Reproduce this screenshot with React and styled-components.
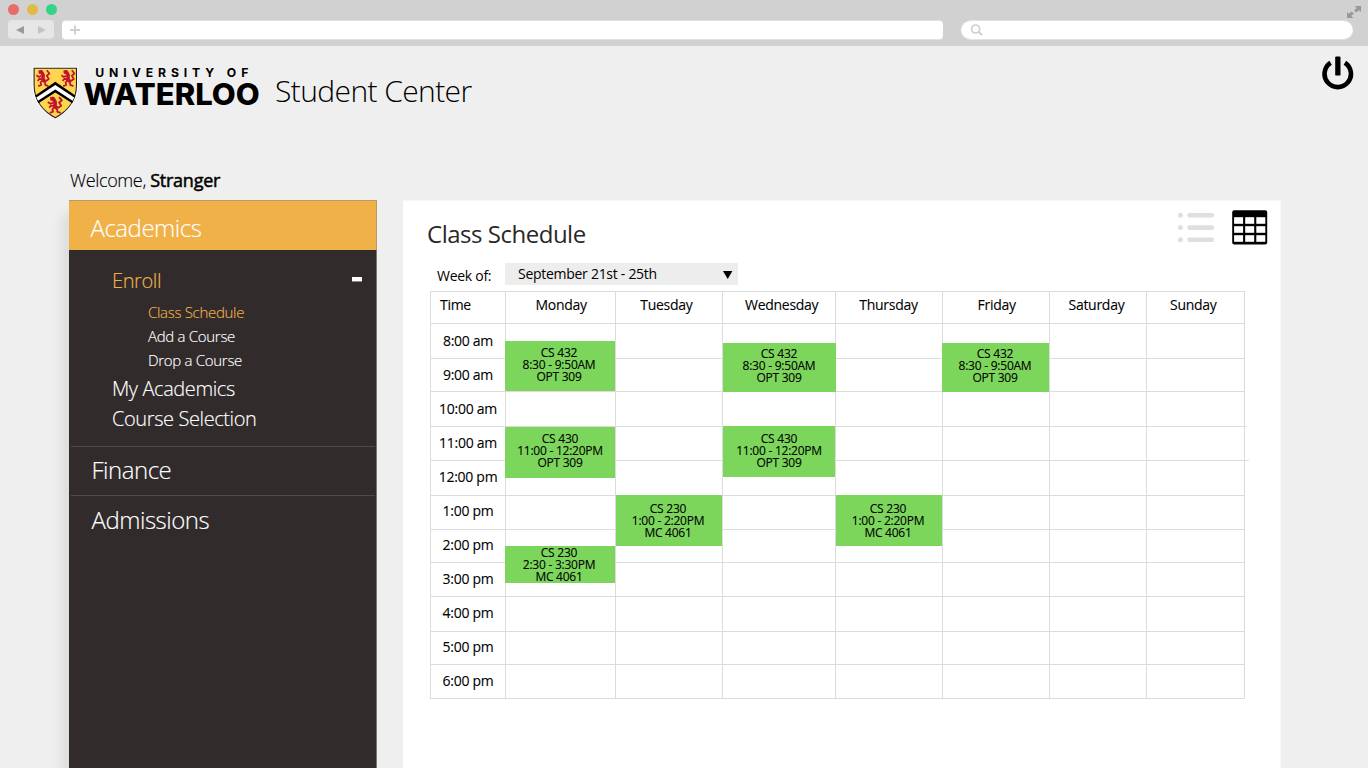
import React from "react";
import styled, { createGlobalStyle } from "styled-components";

const Global = createGlobalStyle`
  * { box-sizing: border-box; letter-spacing: -0.02em; }
  body { margin: 0; background: #efefef; overflow: hidden; }
`;

const Page = styled.div`
  width: 1368px;
  height: 768px;
  overflow: hidden;
  background: #efefef;
  color: #000;
  font-family: "Open Sans", "Noto Sans", sans-serif;
  display: flex;
  flex-direction: column;
`;

/* Browser frame */
const Chrome = styled.div`
  height: 46px;
  flex: none;
  background: #d1d1d1;
  padding: 0 7px 0 8px;
`;
const TitleRow = styled.div`
  height: 20px;
  display: flex;
  justify-content: space-between;
`;
const Dots = styled.div`
  display: flex;
  gap: 8px;
  padding-top: 4px;
`;
const Dot = styled.span`
  width: 11px;
  height: 11px;
  border-radius: 50%;
  background: ${(p) => p.$color};
`;
const ExpandIcon = styled.svg`
  width: 14px;
  height: 12px;
  margin-top: 6px;
`;
const BarRow = styled.div`
  display: flex;
  height: 20px;
`;
const NavButtons = styled.div`
  width: 46px;
  height: 19px;
  border-radius: 4px;
  background: #e6e6e6;
  border-bottom: 1px solid #dedede;
  margin-right: 8px;
`;
const AddressBar = styled.div`
  width: 881px;
  height: 20px;
  border-radius: 4px;
  background: #fff;
  border: 1px solid #e3e3e3;
  border-width: 1px 0;
  margin-right: 18px;
`;
const SearchBar = styled(AddressBar)`
  width: 392px;
  border-radius: 10px;
  margin: 0;
`;
const BarIcon = styled.svg`
  display: block;
`;

/* Header */
const Header = styled.header`
  height: 124px;
  flex: none;
  display: flex;
  padding: 10px 14px 0 30px;
`;
const Logo = styled.svg`
  width: 234px;
  height: 60px;
  margin-top: 8px;
`;
const Wordmark = styled.text`
  font-family: Inter, "Open Sans", sans-serif;
  font-weight: ${(p) => p.$weight};
  font-size: ${(p) => p.$size}px;
  letter-spacing: 0;
`;
const Product = styled.h1`
  flex: 1;
  margin: 14px 0 0 11px;
  font-size: 30px;
  line-height: 42px;
  font-weight: 300;
`;
const PowerIcon = styled.svg`
  width: 33px;
  height: 36px;
`;

const Welcome = styled.div`
  height: 30px;
  flex: none;
  padding-left: 70px;
  font-size: 18px;
  line-height: 20px;
  font-weight: 300;
  -webkit-text-stroke: 0.15px #000;
`;
const UserName = styled.span`
  font-weight: 400;
  letter-spacing: -0.014em;
  -webkit-text-stroke: 0.5px #000;
`;

const Columns = styled.div`
  flex: 1;
  display: flex;
  align-items: stretch;
  gap: 26px;
  padding-left: 69px;
`;

/* Sidebar */
const Sidebar = styled.nav`
  width: 308px;
  background: #312b2b;
  border-right: 1px solid #7b7676;
  box-shadow: -8px 12px 12px -2px rgba(0, 0, 0, 0.09);
  color: #fff;
  font-weight: 300;
  -webkit-text-stroke: 0.15px currentColor;
`;
const ActiveSection = styled.div`
  height: 50px;
  margin-right: -1px;
  border: 1px solid #b89a68;
  border-width: 1px 1px 0 0;
  background: #efb148;
  padding: 9px 0 0 21.5px;
  font-size: 24px;
  line-height: 36px;
`;
const Submenu = styled.div`
  height: 196px;
  padding: 16px 14px 0 43px;
`;
const MenuItem = styled.div`
  display: flex;
  justify-content: space-between;
  height: 30px;
  font-size: 20px;
  line-height: 30px;
  color: ${(p) => (p.$active ? "#efb148" : "#fff")};
`;
const Minus = styled.span`
  width: 10px;
  height: 5px;
  margin-top: 11px;
  background: #fff;
  border-bottom: 1px solid #8c8888;
`;
const SubList = styled.div`
  padding: 4px 0 2px 36px;
`;
const SubItem = styled.div`
  height: 24px;
  font-size: 15px;
  line-height: 24px;
  color: ${(p) => (p.$active ? "#efb148" : "#fff")};
`;
const Section = styled.div`
  height: ${(p) => p.$height}px;
  margin: 0 1px 0 2px;
  padding: ${(p) => p.$pad}px 0 0 20.5px;
  border-top: 1px solid #504b4b;
  font-size: 24px;
  line-height: 36px;
`;

/* Schedule panel */
const Panel = styled.main`
  width: 878px;
  background: #fff;
  border-top: 1px solid #f7f7f7;
  border-right: 1px solid #f7f7f7;
  padding: 9px 12px 0 27px;
`;
const PanelHeader = styled.div`
  display: flex;
  height: 53px;
`;
const PanelTitle = styled.h2`
  flex: 1;
  margin: 6px 0 0 -3px;
  font-size: 24px;
  line-height: 36px;
  font-weight: 400;
  color: #2c2727;
`;
const ListIcon = styled.svg`
  width: 37px;
  height: 32px;
  margin: 1px 17px 0 0;
`;
const TableIcon = styled.svg`
  width: 36px;
  height: 35px;
`;
const WeekRow = styled.div`
  display: flex;
  height: 28px;
  font-size: 14px;
`;
const WeekLabel = styled.label`
  width: 75px;
  padding-left: 7px;
  line-height: 26px;
`;
const WeekSelect = styled.div`
  width: 233px;
  height: 22px;
  display: flex;
  justify-content: space-between;
  padding: 0 5px 0 13px;
  background: #ededed;
  line-height: 22px;
`;
const Caret = styled.svg`
  width: 11px;
  height: 8px;
  margin-top: 8px;
`;

const Calendar = styled.div`
  display: flex;
  width: 815px;
  border-left: 1px solid #dcdcdc;
  border-top: 1px solid #dcdcdc;
  font-size: 14px;
  -webkit-text-stroke: 0.1px currentColor;
`;
const Day = styled.div`
  position: relative;
  width: ${(p) => p.$width}px;
  display: grid;
`;
const Lines = styled.div`
  grid-area: 1 / 1;
`;
const Slot = styled.div`
  height: ${(p) => p.$height}px;
  border-right: 1px solid #dcdcdc;
  border-bottom: 1px solid #dcdcdc;
`;
const Labels = styled.div`
  grid-area: 1 / 1;
`;
const DayName = styled.div`
  height: 32px;
  line-height: 26px;
  padding-left: ${(p) => p.$indent}px;
`;
const Hour = styled.div`
  height: 34px;
  padding-right: 1px;
  line-height: 34px;
  text-align: center;
`;
const Event = styled.div`
  position: absolute;
  left: ${(p) => p.$left}px;
  top: ${(p) => p.$top}px;
  width: ${(p) => p.$width}px;
  height: ${(p) => p.$height}px;
  padding-top: ${(p) => p.$pad}px;
  padding-right: ${(p) => p.$inset}px;
  background: #7cd65c;
  font-size: 12px;
  line-height: 12px;
  text-align: center;
`;
const Stub = styled.span`
  position: absolute;
  left: 98px;
  top: ${(p) => p.$top}px;
  width: ${(p) => p.$width}px;
  height: 1px;
  background: #e2e2e2;
`;

const slots = [32, 35, 33, 35, 34, 35, 34, 33, 34, 35, 33, 34];
const hours = ["8:00 am", "9:00 am", "10:00 am", "11:00 am", "12:00 pm", "1:00 pm", "2:00 pm", "3:00 pm", "4:00 pm", "5:00 pm", "6:00 pm"];

const days = [
  {
    name: "Monday", width: 110, indent: 29.5,
    events: [
      { left: -1, top: 49, width: 110, height: 50, pad: 6, inset: 2, text: ["CS 432", "8:30 - 9:50AM", "OPT 309"] },
      { left: -1, top: 135, width: 110, height: 51, pad: 6, inset: 0, text: ["CS 430", "11:00 - 12:20PM", "OPT 309"] },
      { left: -1, top: 254, width: 110, height: 37, pad: 1, inset: 2, text: ["CS 230", "2:30 - 3:30PM", "MC 4061"] },
    ],
  },
  {
    name: "Tuesday", width: 107, indent: 24.3,
    events: [{ left: 0, top: 203, width: 106, height: 51, pad: 8, inset: 2, text: ["CS 230", "1:00 - 2:20PM", "MC 4061"] }],
  },
  {
    name: "Wednesday", width: 113, indent: 22,
    events: [
      { left: 0, top: 51, width: 113, height: 49, pad: 5, inset: 1, text: ["CS 432", "8:30 - 9:50AM", "OPT 309"] },
      { left: 0, top: 134, width: 112, height: 51, pad: 7, inset: 0, text: ["CS 430", "11:00 - 12:20PM", "OPT 309"] },
    ],
  },
  {
    name: "Thursday", width: 107, indent: 23.3,
    events: [{ left: 0, top: 203, width: 106, height: 51, pad: 8, inset: 2, text: ["CS 230", "1:00 - 2:20PM", "MC 4061"] }],
  },
  {
    name: "Friday", width: 107, indent: 34.5,
    events: [{ left: -1, top: 51, width: 107, height: 49, pad: 5, inset: 1, text: ["CS 432", "8:30 - 9:50AM", "OPT 309"] }],
  },
  { name: "Saturday", width: 97, indent: 18.5, events: [] },
  { name: "Sunday", width: 98, indent: 23, events: [] },
];

const SlotLines = () => (
  <Lines>
    {slots.map((h, i) => (
      <Slot key={i} $height={h} />
    ))}
  </Lines>
);

const Lion = ({ x, y, scaleX = 1 }) => (
  <g transform={`translate(${x} ${y}) scale(${scaleX} 1.08)`} fill="none" stroke="#c1122f" strokeLinejoin="round">
    <path d="M2.6 2.6 L5.4 2.2 L7.2 5.4 L7 9.4 L9.4 11.6" strokeWidth="3.4" />
    <path d="M5.6 6 L2.8 7 L0.4 5.4 M6.4 9 L3.4 8.8 L1.6 10.6 M7 9.8 L4.6 12 L5.2 14.4 L2.2 15.4 M9 11.6 L9.2 14.4 L12.4 15.4 M9.6 11 L12.8 8.8 L10.8 5.8 L13.4 3.8 L10.8 0.8" strokeWidth="1.7" />
  </g>
);

const WaterlooLogo = () => (
  <Logo viewBox="30 64 234 60">
    <path d="M32.6 66.8 H78 V85 C78 102 67 113 55.3 119 C43.6 113 32.6 102 32.6 85 Z" fill="#fff" />
    <path d="M34.1 68.3 H76.5 V85 C76.5 101 66.5 111.8 55.3 117.7 C44.1 111.8 34.1 101 34.1 85 Z" fill="#fdd54f" stroke="#222" strokeWidth="1.1" />
    <Lion x={36} y={69.4} />
    <Lion x={61} y={69.4} />
    <Lion x={47.4} y={96.2} scaleX={1.08} />
    <path d="M35.2 95.4 L55.3 81.8 L75.4 95.4 L72.2 103.2 L55.3 92.4 L38.4 103.2 Z" fill="#000" />
    <path d="M36.4 97.6 L55.3 85 L74.2 97.6 L72.6 100.8 L55.3 89.4 L38 100.8 Z" fill="#fff" />
    <Wordmark x="95.3" y="77.1" $weight={700} $size={12.2} textLength="153" lengthAdjust="spacing">
      UNIVERSITY OF
    </Wordmark>
    <Wordmark x="83.4" y="104.7" $weight={800} $size={29.6} textLength="176.4" lengthAdjust="spacingAndGlyphs">
      WATERLOO
    </Wordmark>
  </Logo>
);

export default function App() {
  return (
    <Page>
      <Global />
      <Chrome>
        <TitleRow>
          <Dots>
            <Dot $color="#e86c69" />
            <Dot $color="#dfbb45" />
            <Dot $color="#36d487" />
          </Dots>
          <ExpandIcon viewBox="0 0 14 12" fill="#999">
            <path d="M7.5 0 H14 V6 L12 4.2 L9.2 6.6 L7 4.6 L9.6 2 Z M0 6 L1.9 7.8 L4.6 5.4 L7 7.4 L4.2 10 L6.4 12 H0 Z" />
          </ExpandIcon>
        </TitleRow>
        <BarRow>
          <NavButtons>
            <BarIcon width="46" height="19" viewBox="0 0 46 19">
              <path d="M8 10 L16 6 V14 Z" fill="#999" />
              <path d="M38 10 L30 6 V14 Z" fill="#c4c4c4" />
            </BarIcon>
          </NavButtons>
          <AddressBar>
            <BarIcon width="24" height="18" viewBox="0 0 24 18">
              <path d="M8 9 H18 M13 4.5 V13.5" stroke="#d0d0d0" strokeWidth="2" />
            </BarIcon>
          </AddressBar>
          <SearchBar>
            <BarIcon width="30" height="18" viewBox="0 0 30 18" fill="none" stroke="#cfcfcf">
              <circle cx="14.6" cy="8" r="4" strokeWidth="1.7" />
              <path d="M17.5 10.8 L21 14" strokeWidth="2.2" />
            </BarIcon>
          </SearchBar>
        </BarRow>
      </Chrome>

      <Header>
        <WaterlooLogo />
        <Product>Student Center</Product>
        <PowerIcon viewBox="1321 56 33 36" fill="none" stroke="#000">
          <path d="M1330.6 62.8 A13.2 13.2 0 1 0 1344.9 62.8" strokeWidth="4.6" />
          <rect x="1335.2" y="56.4" width="5.3" height="19.2" rx="1.2" fill="#000" stroke="none" />
        </PowerIcon>
      </Header>

      <Welcome>
        Welcome, <UserName>Stranger</UserName>
      </Welcome>

      <Columns>
        <Sidebar>
          <ActiveSection>Academics</ActiveSection>
          <Submenu>
            <MenuItem $active>
              Enroll
              <Minus />
            </MenuItem>
            <SubList>
              <SubItem $active>Class Schedule</SubItem>
              <SubItem>Add a Course</SubItem>
              <SubItem>Drop a Course</SubItem>
            </SubList>
            <MenuItem>My Academics</MenuItem>
            <MenuItem>Course Selection</MenuItem>
          </Submenu>
          <Section $height={49} $pad={5}>Finance</Section>
          <Section $height={60} $pad={6}>Admissions</Section>
        </Sidebar>

        <Panel>
          <PanelHeader>
            <PanelTitle>Class Schedule</PanelTitle>
            <ListIcon viewBox="0 0 37 32" fill="#dfdfdf">
              {[2, 14.3, 26.5].map((y) => (
                <g key={y}>
                  <circle cx="2.4" cy={y + 2.3} r="2.5" />
                  <rect x="9.2" y={y} width="27" height="4.6" rx="2.3" />
                </g>
              ))}
            </ListIcon>
            <TableIcon viewBox="0 0 36 35">
              <rect x="0.2" y="0.3" width="35" height="34.2" rx="2" fill="#000" />
              {[7.2, 16.2, 25.2].map((y) =>
                [2.1, 13.2, 24.3].map((x) => <rect key={`${x}-${y}`} x={x} y={y} width="9" height="6.6" fill="#fff" />)
              )}
            </TableIcon>
          </PanelHeader>
          <WeekRow>
            <WeekLabel>Week of:</WeekLabel>
            <WeekSelect>
              September 21st - 25th
              <Caret viewBox="0 0 11 8">
                <path d="M1 0 H10.4 L5.7 8 Z" />
              </Caret>
            </WeekSelect>
          </WeekRow>
          <Calendar>
            <Day $width={75}>
              <SlotLines />
              <Labels>
                <DayName $indent={9}>Time</DayName>
                {hours.map((h) => (
                  <Hour key={h}>{h}</Hour>
                ))}
              </Labels>
            </Day>
            {days.map((d) => (
              <Day key={d.name} $width={d.width}>
                <SlotLines />
                <Labels>
                  <DayName $indent={d.indent}>{d.name}</DayName>
                </Labels>
                {d.events.map((e) => (
                  <Event key={e.top} $left={e.left} $top={e.top} $width={e.width} $height={e.height} $pad={e.pad} $inset={e.inset}>
                    {e.text.map((t) => (
                      <div key={t}>{t}</div>
                    ))}
                  </Event>
                ))}
                {d.name === "Sunday" && (
                  <>
                    <Stub $top={134} $width={2} />
                    <Stub $top={168} $width={4} />
                  </>
                )}
              </Day>
            ))}
          </Calendar>
        </Panel>
      </Columns>
    </Page>
  );
}
